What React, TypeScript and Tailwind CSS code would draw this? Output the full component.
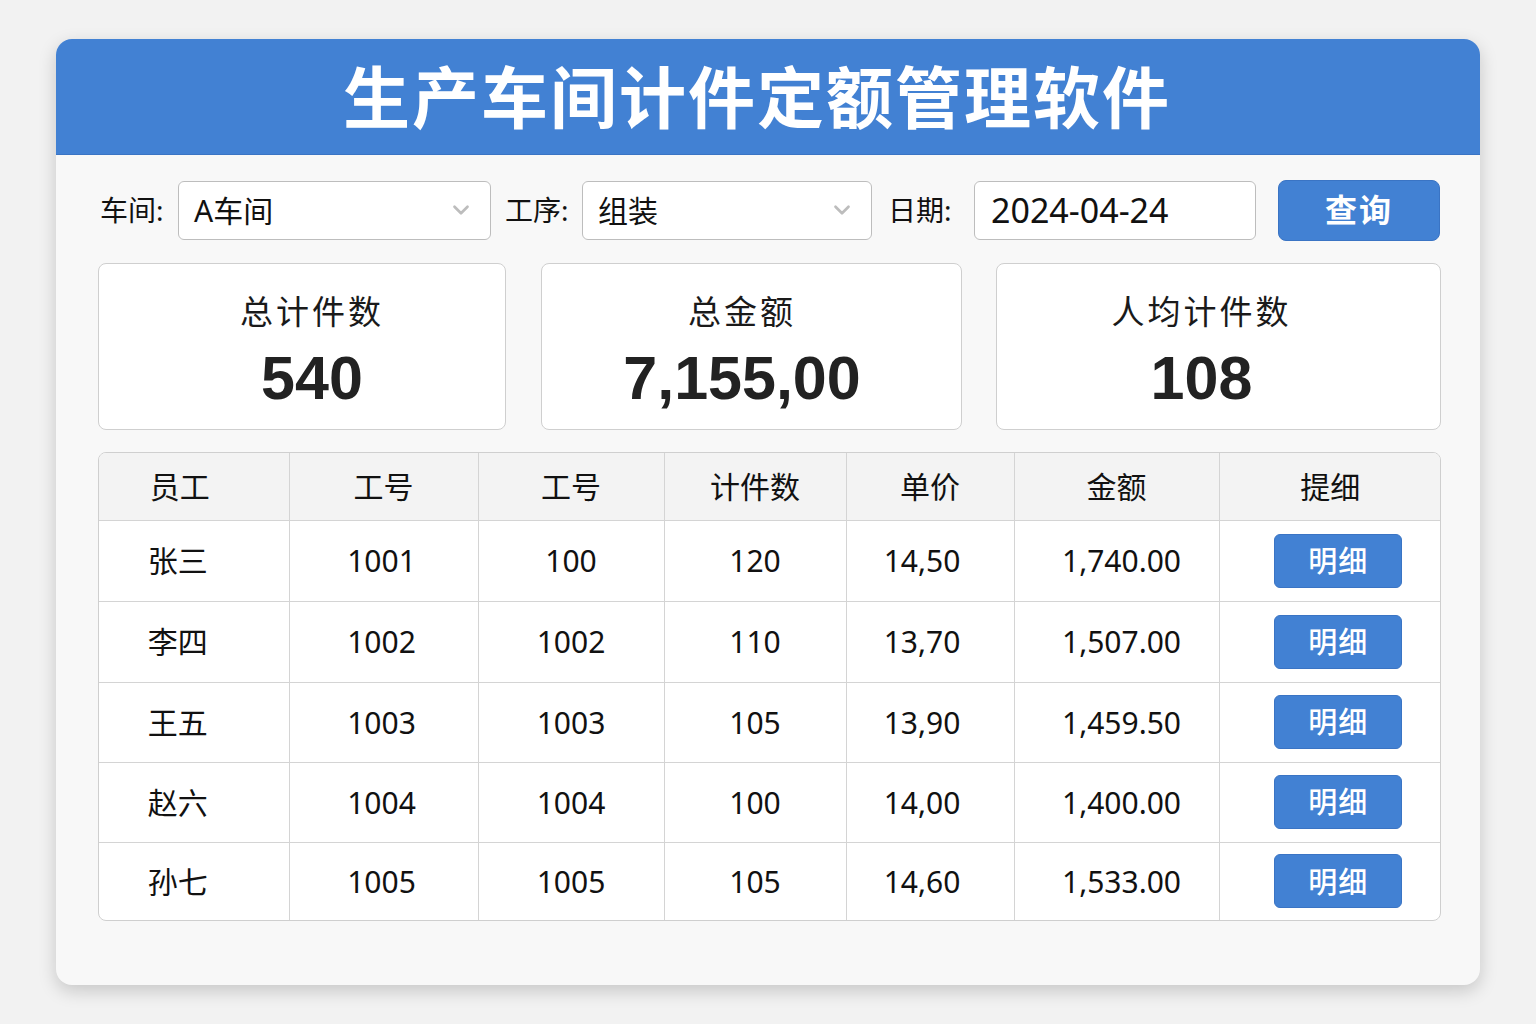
import { ChevronDown } from "lucide-react";

type Row = {
    name: string;
    no1: string;
    no2: string;
    count: string;
    price: string;
    amount: string;
};

const rows: Row[] = [
    { name: "张三", no1: "1001", no2: "100", count: "120", price: "14,50", amount: "1,740.00" },
    { name: "李四", no1: "1002", no2: "1002", count: "110", price: "13,70", amount: "1,507.00" },
    { name: "王五", no1: "1003", no2: "1003", count: "105", price: "13,90", amount: "1,459.50" },
    { name: "赵六", no1: "1004", no2: "1004", count: "100", price: "14,00", amount: "1,400.00" },
    { name: "孙七", no1: "1005", no2: "1005", count: "105", price: "14,60", amount: "1,533.00" },
];

const cjk = "font-['Noto_Sans','Noto_Sans_CJK_SC',sans-serif]";

function SelectBox({ value, width }: { value: string; width: string }) {
    return (
        <div
            className={`${width} h-[59px] flex items-center justify-between pl-[15px] pr-[16px] bg-white border border-[#bdbdbd] rounded-[6px]`}
        >
            <span className="text-[30px] text-[#111]">{value}</span>
            <ChevronDown className="w-[26px] h-[26px] text-[#bdbdbd]" strokeWidth={2.5} />
        </div>
    );
}

function StatCard({ title, value, className }: { title: string; value: string; className: string }) {
    return (
        <div
            className={`${className} h-[167px] flex flex-col items-center justify-center bg-white border border-[#cfcfcf] rounded-[8px] pt-[10px]`}
        >
            <div className="text-[33px] tracking-[3px] text-[#1a1a1a] leading-none">{title}</div>
            <div className="mt-[20px] text-[61px] font-bold text-[#222] leading-none font-['Liberation_Sans',sans-serif]">
                {value}
            </div>
        </div>
    );
}

export default function App() {
    const headers = ["员工", "工号", "工号", "计件数", "单价", "金额", "提细"];
    const widths = ["w-[190px]", "w-[189px]", "w-[186px]", "w-[182px]", "w-[168px]", "w-[205px]", "w-[222px]"];
    const heights = ["h-[81px]", "h-[81px]", "h-[80px]", "h-[80px]", "h-[78px]"];

    return (
        <div className={`min-h-[1024px] bg-[#f2f2f2] pt-[39px] px-[56px] ${cjk}`}>
            <div className="w-[1424px] h-[946px] bg-[#f8f8f8] rounded-[16px] overflow-hidden shadow-[0_6px_18px_rgba(0,0,0,0.18)]">
                {/* Title bar */}
                <div className="h-[116px] bg-[#4281d3] border-b border-[#3a74c4] flex items-center justify-center">
                    <h1 className="text-[67px] font-bold text-white tracking-[2px] leading-none pt-[2px] pr-[22px]">
                        生产车间计件定额管理软件
                    </h1>
                </div>

                <div className="pl-[42px] pr-[39px]">
                    {/* Filters */}
                    <div className="flex items-center mt-[25px] h-[60px]">
                        <span className="ml-[2px] w-[78px] text-[28px] text-[#111]">车间:</span>
                        <SelectBox value="A车间" width="w-[313px]" />
                        <span className="ml-[14px] w-[77px] text-[28px] text-[#111]">工序:</span>
                        <SelectBox value="组装" width="w-[290px]" />
                        <span className="ml-[16px] w-[86px] text-[28px] text-[#111]">日期:</span>
                        <div className="w-[282px] h-[59px] flex items-center pl-[16px] bg-white border border-[#bdbdbd] rounded-[6px]">
                            <span className="text-[34px] text-[#111]">2024-04-24</span>
                        </div>
                        <button className="ml-[22px] w-[162px] h-[61px] bg-[#4281d3] border border-[#3a74c4] rounded-[8px] text-white text-[32px] font-bold tracking-[2px]">
                            查询
                        </button>
                    </div>

                    {/* Stats */}
                    <div className="flex justify-between mt-[23px]">
                        <StatCard title="总计件数" value="540" className="w-[408px] pl-[20px]" />
                        <StatCard title="总金额" value="7,155,00" className="w-[421px] pr-[18px]" />
                        <StatCard title="人均计件数" value="108" className="w-[445px] pr-[34px]" />
                    </div>

                    {/* Table */}
                    <div className="mt-[22px] bg-white border border-[#cfcfcf] rounded-[8px] overflow-hidden">
                        <table className="w-full border-collapse table-fixed">
                            <thead>
                                <tr className="h-[67px] bg-[#f3f3f3]">
                                    {headers.map((h, i) => (
                                        <th
                                            key={i}
                                            className={`${widths[i]} font-normal text-[30px] text-[#111] border-b border-[#d4d4d4] ${
                                                i < 6 ? "border-r" : ""
                                            } ${i === 0 ? "pr-[28px]" : ""}`}
                                        >
                                            {h}
                                        </th>
                                    ))}
                                </tr>
                            </thead>
                            <tbody>
                                {rows.map((r, ri) => {
                                    const cells = [r.name, r.no1, r.no2, r.count, r.price, r.amount];
                                    const last = ri === rows.length - 1;
                                    return (
                                        <tr key={ri} className={heights[ri]}>
                                            {cells.map((c, ci) => (
                                                <td
                                                    key={ci}
                                                    className={`text-center text-[30px] text-[#111] border-r border-[#d4d4d4] ${
                                                        last ? "" : "border-b"
                                                    } ${ci === 0 ? "pr-[32px]" : ""} ${ci === 1 ? "pr-[4px]" : ""} ${
                                                        ci === 4 ? "pr-[16px]" : ""
                                                    } ${ci === 5 ? "pl-[10px]" : ""}`}
                                                >
                                                    {c}
                                                </td>
                                            ))}
                                            <td className={`text-center border-[#d4d4d4] ${last ? "" : "border-b"}`}>
                                                <button className="ml-[16px] w-[128px] h-[54px] bg-[#4281d3] border border-[#3a74c4] rounded-[6px] text-white text-[29px] font-medium tracking-[1px]">
                                                    明细
                                                </button>
                                            </td>
                                        </tr>
                                    );
                                })}
                            </tbody>
                        </table>
                    </div>
                </div>
            </div>
        </div>
    );
}
